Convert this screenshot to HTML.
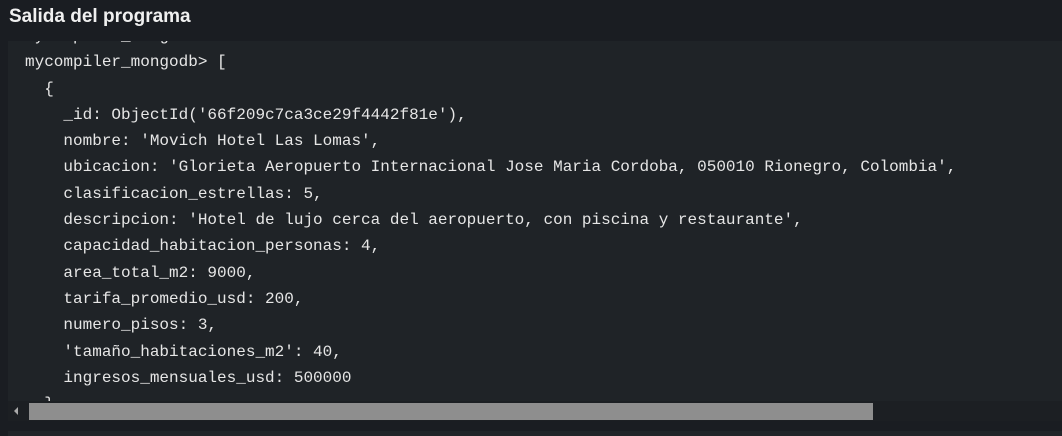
<!DOCTYPE html>
<html><head><meta charset="utf-8"><style>
html,body{margin:0;padding:0;width:1062px;height:436px;overflow:hidden;background:#1a1d22;}
.h{position:absolute;left:9px;top:6px;font:bold 19px "Liberation Sans",sans-serif;color:#f0f0f0;}
.p{position:absolute;left:8px;top:41px;width:1054px;height:360px;background:#1f2327;overflow:hidden;}
pre{margin:0;position:absolute;left:17px;top:-18px;font:16px/26.3px "Liberation Mono",monospace;color:#e6e6e6;}
.sb{position:absolute;left:8px;top:401px;width:1054px;height:20px;background:#1c1f23;}
.th{position:absolute;left:21px;top:2px;width:844px;height:17px;background:#8e8e8e;}
.ar{position:absolute;left:6px;top:6px;width:0;height:0;border-top:4px solid transparent;border-bottom:4px solid transparent;border-right:4px solid #aaa;}
.bt{position:absolute;left:8px;top:431px;width:1054px;height:5px;background:#202428;}
</style></head><body>
<div class="h">Salida del programa</div>
<div class="p"><pre>mycompiler_mongodb&gt;
mycompiler_mongodb&gt; [
  {
    _id: ObjectId('66f209c7ca3ce29f4442f81e'),
    nombre: 'Movich Hotel Las Lomas',
    ubicacion: 'Glorieta Aeropuerto Internacional Jose Maria Cordoba, 050010 Rionegro, Colombia',
    clasificacion_estrellas: 5,
    descripcion: 'Hotel de lujo cerca del aeropuerto, con piscina y restaurante',
    capacidad_habitacion_personas: 4,
    area_total_m2: 9000,
    tarifa_promedio_usd: 200,
    numero_pisos: 3,
    'tamaño_habitaciones_m2': 40,
    ingresos_mensuales_usd: 500000
  },
</pre></div>
<div class="sb"><div class="ar"></div><div class="th"></div></div>
<div class="bt"></div>
</body></html>
